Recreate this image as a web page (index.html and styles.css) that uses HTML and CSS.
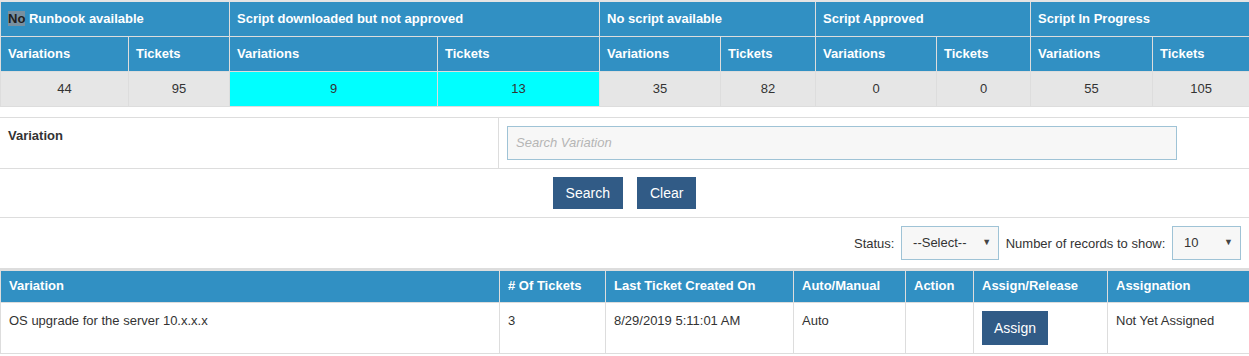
FILE: index.html
```html
<!DOCTYPE html>
<html lang="en">
<head>
    <meta charset="UTF-8">
    <meta name="viewport" content="width=device-width, initial-scale=1.0">
    <title>Runbook Variations</title>
    <link rel="stylesheet" href="styles.css">
</head>
<body>
    <table class="summary">
        <colgroup>
            <col style="width:128px"><col style="width:101px">
            <col style="width:208px"><col style="width:162px">
            <col style="width:121px"><col style="width:95px">
            <col style="width:121px"><col style="width:94px">
            <col style="width:122px"><col style="width:97px">
        </colgroup>
        <tr>
            <th colspan="2"><span class="hl">No</span> Runbook available</th>
            <th colspan="2">Script downloaded but not approved</th>
            <th colspan="2">No script available</th>
            <th colspan="2">Script Approved</th>
            <th colspan="2">Script In Progress</th>
        </tr>
        <tr>
            <th>Variations</th><th>Tickets</th>
            <th>Variations</th><th>Tickets</th>
            <th>Variations</th><th>Tickets</th>
            <th>Variations</th><th>Tickets</th>
            <th>Variations</th><th>Tickets</th>
        </tr>
        <tr>
            <td>44</td><td>95</td>
            <td class="active">9</td><td class="active">13</td>
            <td>35</td><td>82</td>
            <td>0</td><td>0</td>
            <td>55</td><td>105</td>
        </tr>
    </table>

    <table class="search-panel">
        <tr>
            <td class="label-cell">Variation</td>
            <td class="input-cell"><input type="text" class="search-input" placeholder="Search Variation"></td>
        </tr>
        <tr>
            <td colspan="2" class="btn-cell">
                <button class="btn">Search</button>
                <button class="btn">Clear</button>
            </td>
        </tr>
        <tr>
            <td colspan="2" class="filter-cell">
                <span class="filter-label">Status:</span>
                <span class="select-wrap status">
                    <select><option>--Select--</option></select>
                </span>
                <span class="filter-label">Number of records to show:</span>
                <span class="select-wrap records">
                    <select><option>10</option></select>
                </span>
            </td>
        </tr>
    </table>

    <table class="grid">
        <colgroup>
            <col style="width:499px"><col style="width:106px">
            <col style="width:188px"><col style="width:112px">
            <col style="width:68px"><col style="width:134px">
            <col style="width:142px">
        </colgroup>
        <tr>
            <th>Variation</th>
            <th># Of Tickets</th>
            <th>Last Ticket Created On</th>
            <th>Auto/Manual</th>
            <th>Action</th>
            <th>Assign/Release</th>
            <th>Assignation</th>
        </tr>
        <tr>
            <td>OS upgrade for the server 10.x.x.x</td>
            <td>3</td>
            <td>8/29/2019 5:11:01 AM</td>
            <td>Auto</td>
            <td></td>
            <td class="assign-cell"><button class="btn assign">Assign</button></td>
            <td>Not Yet Assigned</td>
        </tr>
    </table>
</body>
</html>
```

FILE: styles.css
```css
body {
    font-family: 'Liberation Sans', Arial, sans-serif;
    font-size: 13px;
    color: #333;
    margin: 0;
    padding: 0;
    background: #fff;
}
table {
    border-collapse: collapse;
    width: 1249px;
    table-layout: fixed;
}
.summary tr {
    height: 35px;
}
.summary th {
    background-color: #3190c3;
    color: #fff;
    font-weight: bold;
    text-align: left;
    padding: 0 7px 1px;
    border: 1px solid #ddd;
    border-top: none;
}
.summary tr:first-child th {
    border-top: 2px solid #e4e4e4;
}
.summary td {
    background-color: #e6e6e6;
    text-align: center;
    border: 1px solid #ddd;
    color: #333;
}
.summary td.active {
    background-color: #00ffff;
}
.hl {
    background-color: #7890a0;
    color: #1e1e1e;
}
.search-panel {
    margin-top: 10px;
}
.search-panel td {
    border: 1px solid #ddd;
    border-left: none;
    border-right: none;
    padding: 8px;
}
.label-cell {
    width: 482px;
    font-weight: bold;
    vertical-align: top;
    height: 32px;
    padding-top: 10px !important;
}
.input-cell {
    border-left: 1px solid #ddd !important;
}
.search-input {
    display: block;
    width: 670px;
    height: 34px;
    box-sizing: border-box;
    background-color: #f7f7f7;
    border: 1px solid #9fc3d6;
    padding: 0 8px;
    font-family: inherit;
    font-size: 13px;
}
.search-input::placeholder {
    color: #b5b5b5;
    font-style: italic;
}
.btn-cell {
    text-align: center;
    font-size: 0;
}
.btn {
    background-color: #315b86;
    color: #fff;
    border: none;
    font-family: inherit;
    font-size: 14px;
    height: 32px;
    padding: 0 13px;
    margin: 0 7px;
    cursor: pointer;
}
.filter-cell {
    text-align: right;
    height: 34px;
    font-size: 13px;
}
.filter-label {
    vertical-align: middle;
}
.select-wrap {
    position: relative;
    display: inline-block;
    vertical-align: middle;
    margin: 0 3px;
}
.select-wrap:last-child {
    margin-right: 0;
}
.select-wrap select {
    display: block;
    appearance: none;
    -webkit-appearance: none;
    background-color: #f7f7f7;
    border: 1px solid #9fc3d6;
    border-radius: 0;
    height: 34px;
    padding: 0 11px;
    font-family: inherit;
    font-size: 13px;
    color: #333;
}
.select-wrap::after {
    content: "\25BC";
    position: absolute;
    right: 8px;
    top: 11px;
    font-size: 9px;
    color: #444;
    pointer-events: none;
}
.status select {
    width: 98px;
}
.records select {
    width: 69px;
}
.grid {
    border-top: 2px solid #ddd;
}
.grid tr:first-child {
    height: 33px;
}
.grid th {
    background-color: #3190c3;
    color: #fff;
    font-weight: bold;
    text-align: left;
    padding: 0 8px 1px;
    border: 1px solid #ddd;
    border-top: none;
}
.grid td {
    vertical-align: top;
    padding: 10px 8px 8px;
    height: 32px;
    border: 1px solid #ddd;
    color: #333;
}
.assign-cell {
    padding-top: 8px !important;
}
.btn.assign {
    height: 34px;
    margin: 0;
    padding: 0 12px;
}
```
